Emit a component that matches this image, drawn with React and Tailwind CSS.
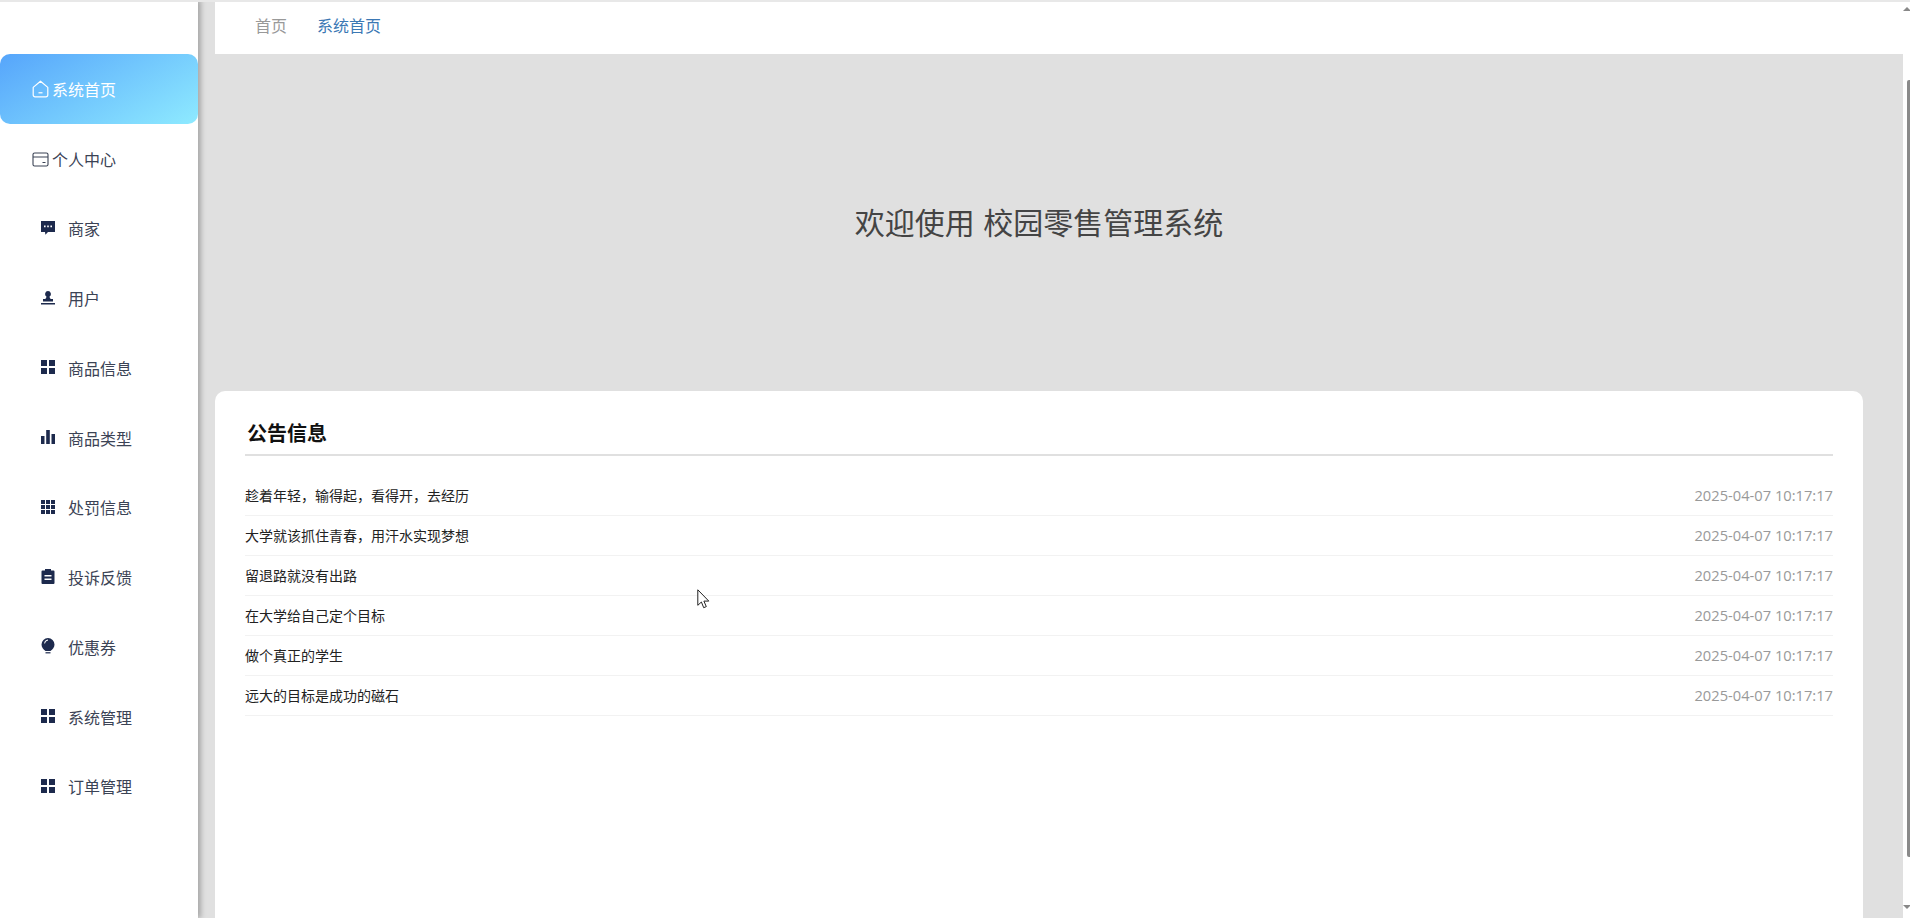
import React from 'react';

const FONT = "font-['Liberation_Sans','Noto_Sans_CJK_SC',sans-serif]";

const HomeIcon = () => (
  <svg width="17" height="18" viewBox="0 0 17 18" fill="none" stroke="#fff" strokeWidth="1.2" className="shrink-0">
    <path d="M1.200 7.400 8.500 1.200l7.300 6.200V15a1.800 1.800 0 0 1-1.800 1.800H3A1.800 1.800 0 0 1 1.200 15z" strokeLinejoin="round" />
    <path d="M6.500 12.800h4" />
  </svg>
);

const CardIcon = () => (
  <svg width="17" height="17" viewBox="0 0 17 17" fill="none" stroke="#3b4355" strokeWidth="1.1" className="shrink-0">
    <rect x="1" y="2" width="15" height="13" rx="1.600" />
    <path d="M1 6h15M10.500 11.500h3" />
  </svg>
);

const CommentIcon = () => (
  <svg width="14" height="14" viewBox="0 0 14 14" fill="#1d2a4d">
    <path fillRule="evenodd" d="M0 0h14v11H7l-2.600 2.800L4 11H0zM3 4.500v1.700h1.600V4.500zm3.200 0v1.700h1.600V4.500zm3.200 0v1.700H11V4.500z" />
  </svg>
);

const StampIcon = () => (
  <svg width="14" height="14" viewBox="0 0 14 14" fill="#1d2a4d">
    <path d="M7 0a3 3 0 0 1 1.600 5.500c0 1.300.5 2 1.200 2.600H12v2.400H2V8.100h2.200C4.900 7.500 5.400 6.800 5.400 5.500A3 3 0 0 1 7 0zM0 12h14v1.600H0z" />
  </svg>
);

const MenuIcon = () => (
  <svg width="14" height="14" viewBox="0 0 14 14" fill="#1d2a4d">
    <path d="M0 0h6v6H0zM8 0h6v6H8zM0 8h6v6H0zM8 8h6v6H8z" />
  </svg>
);

const BarsIcon = () => (
  <svg width="14" height="14" viewBox="0 0 14 14" fill="#1d2a4d">
    <path d="M0 6h3.500v8H0zM5.200 0h3.600v14H5.200zM10.500 4H14v10h-3.500z" />
  </svg>
);

const GridIcon = () => (
  <svg width="14" height="14" viewBox="0 0 14 14" fill="#1d2a4d">
    <path d="M0 0h4v4H0zM5 0h4v4H5zM10 0h4v4h-4zM0 5h4v4H0zM5 5h4v4H5zM10 5h4v4h-4zM0 10h4v4H0zM5 10h4v4H5zM10 10h4v4h-4z" />
  </svg>
);

const OrderIcon = () => (
  <svg width="14" height="15" viewBox="0 0 14 15" fill="#1d2a4d">
    <path fillRule="evenodd" d="M4 0h6v1.500h2.500a1 1 0 0 1 1 1V14a1 1 0 0 1-1 1h-11a1 1 0 0 1-1-1V2.500a1 1 0 0 1 1-1H4zM3.500 6v1.500h7V6zm0 3.500V11h7V9.500z" />
  </svg>
);

const BulbIcon = () => (
  <svg width="14" height="16" viewBox="0 0 14 16" fill="#1d2a4d">
    <path fillRule="evenodd" d="M7 0a6.500 6.500 0 0 1 6.500 6.500c0 3-1.900 5-4 6.500h-5c-2.100-1.500-4-3.500-4-6.500A6.500 6.500 0 0 1 7 0zM4 5.500A3.500 3.500 0 0 1 7 2.400V1.600a4.300 4.300 0 0 0-3.800 3.900z" />
    <path d="M4.500 14.200h5v1.200h-5z" />
  </svg>
);

const subMenus = [
  { name: '商家', icon: CommentIcon },
  { name: '用户', icon: StampIcon },
  { name: '商品信息', icon: MenuIcon },
  { name: '商品类型', icon: BarsIcon },
  { name: '处罚信息', icon: GridIcon },
  { name: '投诉反馈', icon: OrderIcon },
  { name: '优惠券', icon: BulbIcon },
  { name: '系统管理', icon: MenuIcon },
  { name: '订单管理', icon: MenuIcon },
];

const notices = [
  '趁着年轻，输得起，看得开，去经历',
  '大学就该抓住青春，用汗水实现梦想',
  '留退路就没有出路',
  '在大学给自己定个目标',
  '做个真正的学生',
  '远大的目标是成功的磁石',
];

export default function App() {
  return (
    <div className={`relative flex h-[918px] w-[1910px] overflow-hidden bg-white ${FONT}`}>
      {/* sidebar */}
      <aside className="relative z-10 w-[198px] shrink-0 bg-white pt-[54px] shadow-[3px_0_5px_rgba(0,0,0,0.25)]">
        <div className="flex h-[70px] items-center gap-[3px] rounded-[10px] bg-[linear-gradient(150deg,#56a5fb,#8eeaff)] pl-[32px] text-[16px] text-white">
          <HomeIcon />
          <span className="pt-[3px]">系统首页</span>
        </div>
        <div className="flex h-[70px] items-center gap-[3px] pl-[32px] text-[16px] text-[#3b4355]">
          <CardIcon />
          <span className="pt-[4px]">个人中心</span>
        </div>
        {subMenus.map((item) => {
          const Icon = item.icon;
          return (
            <div key={item.name} className="flex h-[69.75px] items-center text-[16px] text-[#3b4355]">
              <span className="flex w-[68px] justify-end pr-[13px] pb-[2px]">
                <Icon />
              </span>
              <span className="pt-[3px]">{item.name}</span>
            </div>
          );
        })}
      </aside>

      {/* main */}
      <main className="flex w-[1705px] shrink-0 flex-col bg-[#e0e0e0] pl-[17px]">
        <nav className="flex h-[54px] items-center gap-[30px] bg-white pl-[40px] text-[16px]">
          <span className="text-[#999999]">首页</span>
          <span className="text-[#3b78b4]">系统首页</span>
        </nav>
        <div className="flex h-[337px] items-center justify-center pt-[2px] pr-[40px]">
          <h1 className="text-[30px] font-normal text-[#444444]">欢迎使用 校园零售管理系统</h1>
        </div>
        <section className="mr-[40px] flex-1 rounded-t-[10px] bg-white px-[30px] pt-[29px]">
          <h2 className="h-[36px] border-b-2 border-[#e0e0e0] pl-[2px] text-[20px] leading-[28px] font-bold text-[#111111]">公告信息</h2>
          <ul className="pt-[20px]">
            {notices.map((text) => (
              <li key={text} className="flex h-[40px] items-center justify-between border-b border-[#f2f2f2] pt-[2px] text-[14px]">
                <span className="text-[#222222]">{text}</span>
                <span className="mb-[2px] font-['Open_Sans',sans-serif] text-[14.7px] text-[#999999]">2025-04-07 10:17:17</span>
              </li>
            ))}
          </ul>
        </section>
      </main>

      {/* scrollbar */}
      <div className="flex flex-1 flex-col items-end bg-white">
        <div className="mt-[7px] h-0 w-0 border-x-[4px] border-b-[4px] border-x-transparent border-b-[#888888]" />
        <div className="mt-[69px] h-[777px] w-[4px] rounded-l-[2px] bg-[#8a8a8a]" />
        <div className="mt-[48px] h-0 w-0 border-x-[4px] border-t-[4px] border-x-transparent border-t-[#888888]" />
      </div>

      {/* top edge of the capture */}
      <div className="absolute top-0 left-0 z-20 h-[2px] w-full bg-[#e8e8e8]" />

      {/* mouse pointer */}
      <svg className="absolute top-[589px] left-[697px] z-20" width="13" height="21" viewBox="0 0 13 21" fill="#fff" stroke="#222" strokeWidth="1">
        <path d="M.8.8v15.500l3.600-3.300 2.300 5.700 2.600-1.100-2.400-5.500h4.900z" />
      </svg>
    </div>
  );
}
